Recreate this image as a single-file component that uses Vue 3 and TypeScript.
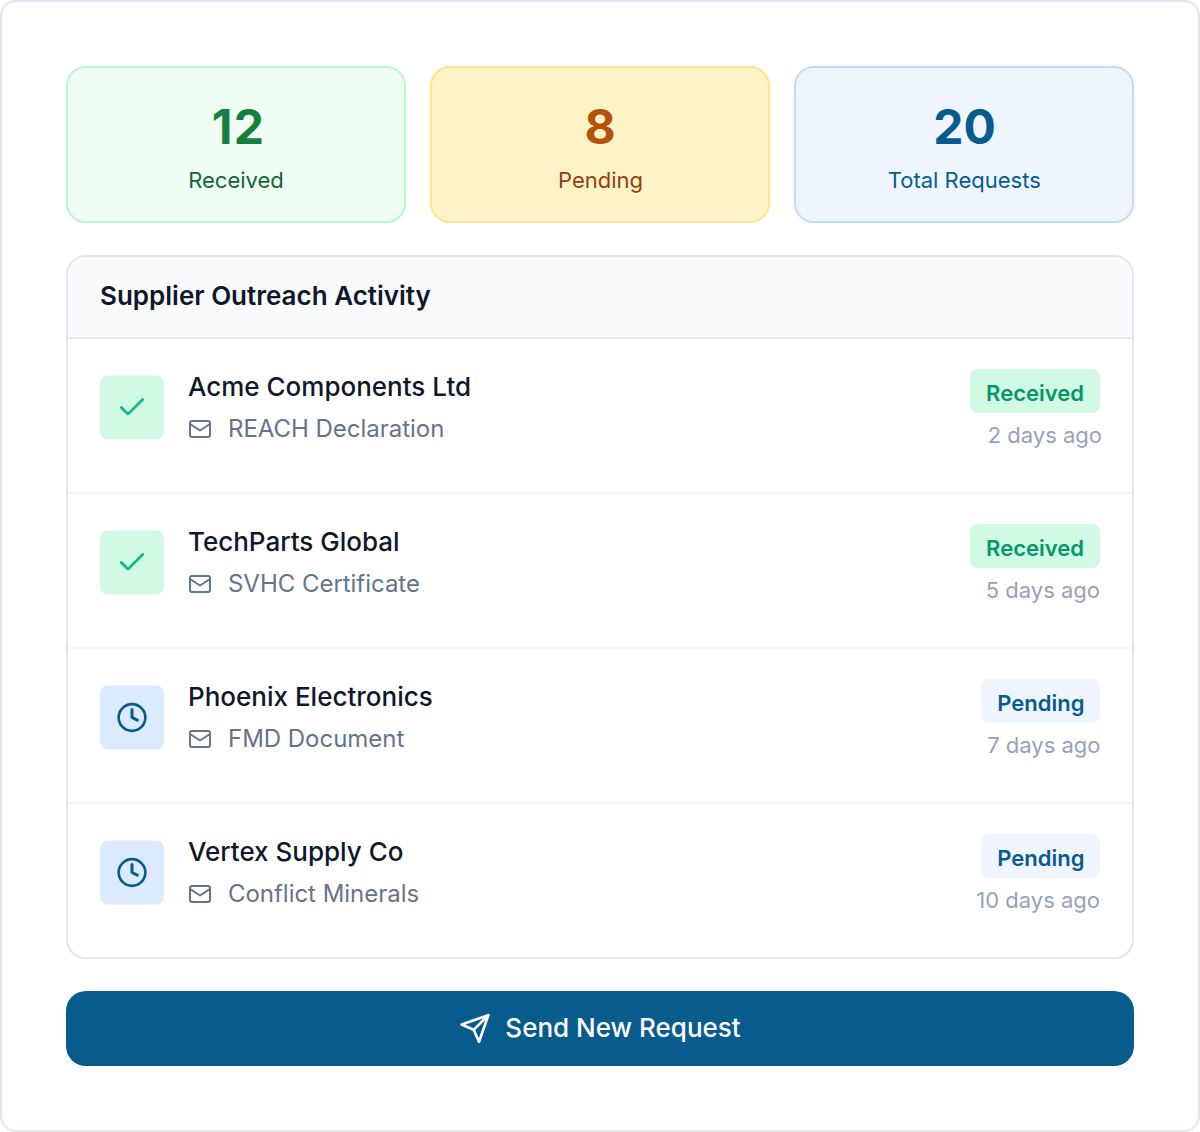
<script setup lang="ts">
interface Stat { value: number; label: string; tone: string }
interface Supplier { name: string; doc: string; received: boolean; ago: string }

const stats: Stat[] = [
  { value: 12, label: 'Received', tone: 'green' },
  { value: 8, label: 'Pending', tone: 'amber' },
  { value: 20, label: 'Total Requests', tone: 'blue' },
]
const suppliers: Supplier[] = [
  { name: 'Acme Components Ltd', doc: 'REACH Declaration', received: true, ago: '2 days ago' },
  { name: 'TechParts Global', doc: 'SVHC Certificate', received: true, ago: '5 days ago' },
  { name: 'Phoenix Electronics', doc: 'FMD Document', received: false, ago: '7 days ago' },
  { name: 'Vertex Supply Co', doc: 'Conflict Minerals', received: false, ago: '10 days ago' },
]
</script>

<template>
  <main class="card">
    <section class="stats">
      <div v-for="s in stats" :key="s.label" class="stat" :class="s.tone">
        <div class="value">{{ s.value }}</div>
        <div class="label">{{ s.label }}</div>
      </div>
    </section>

    <section class="panel">
      <h2 class="title">Supplier Outreach Activity</h2>
      <div v-for="s in suppliers" :key="s.name" class="row" :class="s.received ? 'received' : 'pending'">
        <div class="tile">
          <svg v-if="s.received" width="32" height="32" viewBox="0 0 24 24"><path d="M20 6 9 17l-5-5" /></svg>
          <svg v-else width="32" height="32" viewBox="0 0 24 24"><circle cx="12" cy="12" r="10" /><path class="hands" d="M12 6v6l4 2" /></svg>
        </div>
        <div class="info">
          <div class="name">{{ s.name }}</div>
          <div class="doc">
            <svg width="24" height="24" viewBox="0 0 24 24"><rect x="2" y="4" width="20" height="16" rx="2" /><path d="m22 7-10 6.5L2 7" /></svg>
            <span>{{ s.doc }}</span>
          </div>
        </div>
        <div class="status">
          <span class="badge">{{ s.received ? 'Received' : 'Pending' }}</span>
          <span class="ago">{{ s.ago }}</span>
        </div>
      </div>
    </section>

    <button class="send" type="button">
      <svg width="32" height="32" viewBox="0 0 24 24"><path d="m22 2-7 20-4-9-9-4Z" /><path d="M22 2 11 13" /></svg>
      <span>Send New Request</span>
    </button>
  </main>
</template>

<style>
body { margin: 0; background: #fff; }
</style>

<style scoped>
* { box-sizing: border-box; }
svg { fill: none; stroke: currentColor; stroke-width: 2; stroke-linecap: round; stroke-linejoin: round; flex: none; display: block; }
.hands { stroke-width: 2.3; }
.card { width: 1200px; height: 1132px; padding: 64px; border: 2px solid #e2e8f0; border-radius: 16px; background: #fff; font-family: Inter, sans-serif; display: flex; flex-direction: column; }
.stats { display: grid; grid-template-columns: repeat(3, 1fr); gap: 24px; }
.stat { height: 157px; border: 2px solid; border-radius: 20px; text-align: center; padding-top: 25px; }
.value { font-size: 48px; line-height: 68px; font-weight: 700; }
.label { margin-top: 1px; font-size: 22px; line-height: 36px; }
.green { background: #f0fdf4; border-color: #bbf7d0; color: #15803d; }
.green .value { letter-spacing: 1.4px; padding-left: 5px; }
.green .label { color: #166534; }
.amber { background: #fef3c7; border-color: #fde68a; color: #b45309; }
.amber .label { color: #92400e; padding-left: 1px; }
.blue { background: #eff6ff; border-color: #bfdbfe; color: #085b8d; }
.blue .value { padding-left: 1px; }
.blue .label { padding-left: 0.5px; }
.panel { margin-top: 32px; height: 704px; border: 2px solid #e2e8f0; border-radius: 20px; overflow: hidden; }
.title { margin: 0; height: 82px; padding: 0 32px; background: #f8fafc; border-bottom: 2px solid #e2e8f0; font-size: 26px; line-height: 78px; font-weight: 600; color: #0f172a; }
.row { height: 155px; padding: 30px 32px 0; display: flex; border-bottom: 2px solid #f1f5f9; }
.row:last-child { border-bottom: 0; }
.tile { width: 64px; height: 64px; margin: 7px 24px 0 0; border-radius: 8px; display: flex; align-items: center; justify-content: center; transform: translateY(-0.5px); }
.received .tile { background: #d1fae5; color: #10b981; }
.pending .tile { background: #dbeafe; color: #085b8d; }
.info { flex: 1; }
.name { font-size: 26px; line-height: 36px; font-weight: 500; color: #0f172a; }
.doc { display: flex; align-items: center; gap: 16px; margin-top: 6px; font-size: 24px; line-height: 36px; letter-spacing: -0.03px; color: #64748b; }
.status { display: flex; flex-direction: column; align-items: flex-end; }
.badge { height: 44px; padding: 0 16px; border-radius: 8px; font-size: 22px; line-height: 48px; font-weight: 600; }
.received .badge { background: #d1fae5; color: #059669; }
.pending .badge { padding: 0 15.5px 0 16.5px; background: #eff6ff; color: #085b8d; }
.ago { margin-top: 6px; font-size: 22px; line-height: 32px; color: #94a3b8; }
.row:nth-child(2) .ago { margin-right: -2px; }
.row:nth-child(4) .ago { margin-right: -0.5px; }
.send { margin-top: 32px; height: 75px; padding: 0 0 1px; border: 0; border-radius: 20px; background: #085b8d; color: #fff; display: flex; align-items: center; justify-content: center; gap: 14px; font: 500 26px/36px Inter, sans-serif; }
.send svg { transform: translateY(0.5px); }
</style>
